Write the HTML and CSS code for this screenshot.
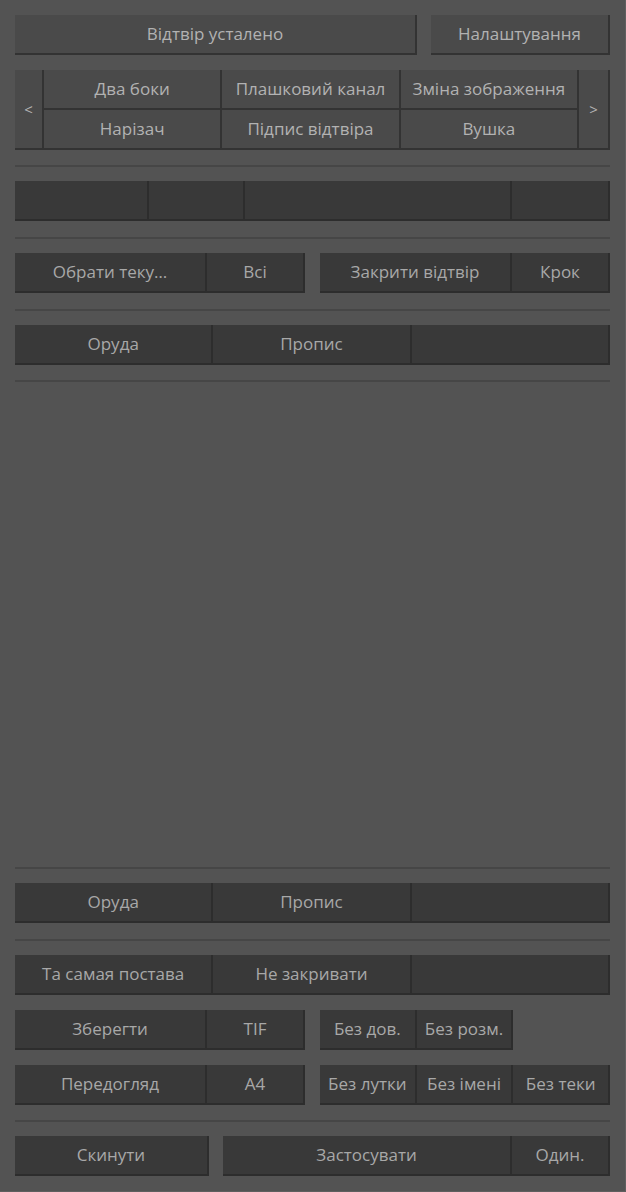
FILE: index.html
```html
<!DOCTYPE html>
<html lang="uk">
<head>
<meta charset="utf-8">
<title>Панель</title>
<link rel="stylesheet" href="styles.css">
</head>
<body>
<div class="panel">
  <div class="row-top">
    <div class="cell light">Відтвір усталено</div>
    <div class="cell light">Налаштування</div>
  </div>

  <div class="tabs">
    <div class="cell light arrow">&lt;</div>
    <div class="cell light">Два боки</div>
    <div class="cell light">Плашковий канал</div>
    <div class="cell light">Зміна зображення</div>
    <div class="cell light arrow">&gt;</div>
    <div class="cell light">Нарізач</div>
    <div class="cell light">Підпис відтвіра</div>
    <div class="cell light">Вушка</div>
  </div>

  <div class="sep sep-tight"></div>

  <div class="strip">
    <div class="cell dark"></div>
    <div class="cell dark"></div>
    <div class="cell dark"></div>
    <div class="cell dark"></div>
  </div>

  <div class="sep"></div>

  <div class="halves">
    <div class="pair">
      <div class="cell dark">Обрати теку…</div>
      <div class="cell dark">Всі</div>
    </div>
    <div class="pair">
      <div class="cell dark">Закрити відтвір</div>
      <div class="cell dark">Крок</div>
    </div>
  </div>

  <div class="sep"></div>

  <div class="thirds">
    <div class="cell dark">Оруда</div>
    <div class="cell dark">Пропис</div>
    <div class="cell dark"></div>
  </div>

  <div class="sep sep-tight"></div>

  <div class="spacer"></div>

  <div class="sep"></div>

  <div class="thirds">
    <div class="cell dark">Оруда</div>
    <div class="cell dark">Пропис</div>
    <div class="cell dark"></div>
  </div>

  <div class="sep"></div>

  <div class="thirds">
    <div class="cell dark">Та самая постава</div>
    <div class="cell dark">Не закривати</div>
    <div class="cell dark"></div>
  </div>

  <div class="halves gap-top">
    <div class="pair">
      <div class="cell dark">Зберегти</div>
      <div class="cell dark">TIF</div>
    </div>
    <div class="triple">
      <div class="cell dark">Без дов.</div>
      <div class="cell dark">Без розм.</div>
    </div>
  </div>

  <div class="halves gap-top">
    <div class="pair">
      <div class="cell dark">Передогляд</div>
      <div class="cell dark">A4</div>
    </div>
    <div class="triple">
      <div class="cell dark">Без лутки</div>
      <div class="cell dark">Без імені</div>
      <div class="cell dark">Без теки</div>
    </div>
  </div>

  <div class="sep sep-tight"></div>

  <div class="row-bottom">
    <div class="cell dark">Скинути</div>
    <div class="pair">
      <div class="cell dark">Застосувати</div>
      <div class="cell dark">Один.</div>
    </div>
  </div>
</div>
</body>
</html>
```

FILE: styles.css
```css
* {
  box-sizing: border-box;
}

html, body {
  margin: 0;
  padding: 0;
  background: #535353;
}

body {
  width: 626px;
  height: 1192px;
  border-right: 1px solid #5f5f5f;
  border-bottom: 1px solid #5f5f5f;
}

.panel {
  height: 100%;
  display: flex;
  flex-direction: column;
  padding: 15px 15px 15px 15px;
  font-family: "Open Sans", "Noto Sans", sans-serif;
  font-size: 17px;
  color: #b0b0b0;
}

.cell {
  height: 40px;
  display: flex;
  align-items: center;
  justify-content: center;
  white-space: nowrap;
  overflow: hidden;
  border-right: 2px solid #303030;
  border-bottom: 2px solid #303030;
  padding-bottom: 1px;
}

.cell.light {
  background: #4a4a4a;
  border-color: #333333;
  color: #b2b2b2;
}

.cell.dark {
  background: #393939;
  border-color: #2d2d2d;
  color: #a8a8a8;
}

.row-top {
  display: grid;
  grid-template-columns: 1fr 179px;
  column-gap: 14px;
}

.tabs {
  margin-top: 15px;
  display: grid;
  grid-template-columns: 29px repeat(3, 1fr) 31px;
  grid-template-rows: 40px 40px;
}

.tabs .arrow {
  grid-row: 1 / span 2;
  height: 80px;
  font-size: 15px;
}

.tabs .arrow:first-child {
  grid-column: 1;
}

.tabs .arrow:nth-child(5) {
  grid-column: 5;
}

.sep {
  height: 2px;
  margin: 16px 0 14px;
  background: #464646;
  flex: none;
}

.sep.sep-tight {
  margin-top: 15px;
}

.strip {
  display: grid;
  grid-template-columns: 134px 96px 1fr 98px;
}

.halves {
  display: grid;
  grid-template-columns: 1fr 1fr;
  column-gap: 15px;
}

.gap-top {
  margin-top: 15px;
}

.pair {
  display: grid;
  grid-template-columns: 1fr 98px;
}

.triple {
  display: grid;
  grid-template-columns: repeat(3, 1fr);
}

.thirds {
  display: grid;
  grid-template-columns: repeat(3, 1fr);
}

.spacer {
  flex: 1;
}

.row-bottom {
  display: grid;
  grid-template-columns: 194px 1fr;
  column-gap: 14px;
}
```
